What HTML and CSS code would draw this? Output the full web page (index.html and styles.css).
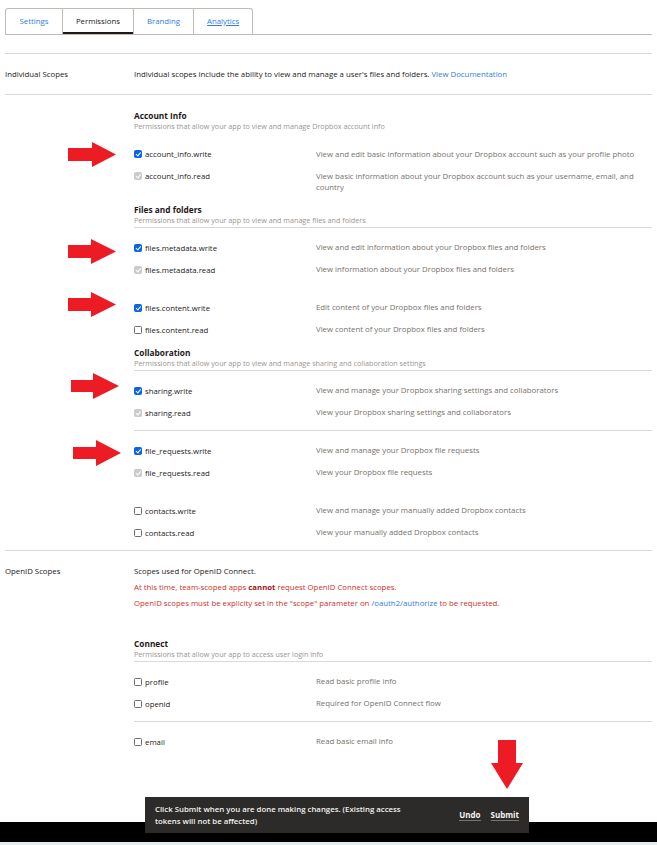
FILE: index.html
```html
<!DOCTYPE html>
<html lang="en">
<head>
    <meta charset="UTF-8">
    <meta name="viewport" content="width=device-width, initial-scale=1.0">
    <title>App Permissions</title>
    <link rel="stylesheet" href="styles.css">
</head>
<body>
    <div class="page">
        <nav class="tabs">
            <a class="tab">Settings</a>
            <a class="tab active">Permissions</a>
            <a class="tab">Branding</a>
            <a class="tab underlined">Analytics</a>
        </nav>

        <div class="section-row">
            <div class="section-label">Individual Scopes</div>
            <div class="section-body">Individual scopes include the ability to view and manage a user's files and folders. <a class="link">View Documentation</a></div>
        </div>

        <div class="section-row scopes">
            <div class="section-label"></div>
            <div class="section-body">
                <div class="group">
                    <h3 class="group-title">Account Info</h3>
                    <p class="group-sub">Permissions that allow your app to view and manage Dropbox account info</p>
                    <div class="block no-rule">
                        <div class="scope"><span class="scope-name"><span class="cb on"></span>account_info.write</span><span class="scope-desc">View and edit basic information about your Dropbox account such as your profile photo</span></div>
                        <div class="scope"><span class="scope-name"><span class="cb locked"></span>account_info.read</span><span class="scope-desc">View basic information about your Dropbox account such as your username, email, and country</span></div>
                    </div>
                </div>

                <div class="group">
                    <h3 class="group-title">Files and folders</h3>
                    <p class="group-sub">Permissions that allow your app to view and manage files and folders</p>
                    <div class="block">
                        <div class="scope"><span class="scope-name"><span class="cb on"></span>files.metadata.write</span><span class="scope-desc">View and edit information about your Dropbox files and folders</span></div>
                        <div class="scope"><span class="scope-name"><span class="cb locked"></span>files.metadata.read</span><span class="scope-desc">View information about your Dropbox files and folders</span></div>
                    </div>
                    <div class="block no-rule">
                        <div class="scope"><span class="scope-name"><span class="cb on"></span>files.content.write</span><span class="scope-desc">Edit content of your Dropbox files and folders</span></div>
                        <div class="scope"><span class="scope-name"><span class="cb"></span>files.content.read</span><span class="scope-desc">View content of your Dropbox files and folders</span></div>
                    </div>
                </div>

                <div class="group">
                    <h3 class="group-title">Collaboration</h3>
                    <p class="group-sub">Permissions that allow your app to view and manage sharing and collaboration settings</p>
                    <div class="block">
                        <div class="scope"><span class="scope-name"><span class="cb on"></span>sharing.write</span><span class="scope-desc">View and manage your Dropbox sharing settings and collaborators</span></div>
                        <div class="scope"><span class="scope-name"><span class="cb locked"></span>sharing.read</span><span class="scope-desc">View your Dropbox sharing settings and collaborators</span></div>
                    </div>
                    <div class="block">
                        <div class="scope"><span class="scope-name"><span class="cb on"></span>file_requests.write</span><span class="scope-desc">View and manage your Dropbox file requests</span></div>
                        <div class="scope"><span class="scope-name"><span class="cb locked"></span>file_requests.read</span><span class="scope-desc">View your Dropbox file requests</span></div>
                    </div>
                    <div class="block no-rule">
                        <div class="scope"><span class="scope-name"><span class="cb"></span>contacts.write</span><span class="scope-desc">View and manage your manually added Dropbox contacts</span></div>
                        <div class="scope"><span class="scope-name"><span class="cb"></span>contacts.read</span><span class="scope-desc">View your manually added Dropbox contacts</span></div>
                    </div>
                </div>
            </div>
        </div>

        <div class="section-row openid">
            <div class="section-label">OpenID Scopes</div>
            <div class="section-body">
                <p class="line">Scopes used for OpenID Connect.</p>
                <p class="line warn">At this time, team-scoped apps <b>cannot</b> request OpenID Connect scopes.</p>
                <p class="line warn">OpenID scopes must be explicity set in the "scope" parameter on <a class="link">/oauth2/authorize</a> to be requested.</p>

                <div class="group connect">
                    <h3 class="group-title">Connect</h3>
                    <p class="group-sub">Permissions that allow your app to access user login info</p>
                    <div class="block">
                        <div class="scope"><span class="scope-name"><span class="cb"></span>profile</span><span class="scope-desc">Read basic profile info</span></div>
                        <div class="scope"><span class="scope-name"><span class="cb"></span>openid</span><span class="scope-desc">Required for OpenID Connect flow</span></div>
                    </div>
                    <div class="block">
                        <div class="scope"><span class="scope-name"><span class="cb"></span>email</span><span class="scope-desc">Read basic email info</span></div>
                    </div>
                </div>
            </div>
        </div>
    </div>

    <footer class="footer"></footer>

    <div class="toast">
        <span class="toast-text">Click Submit when you are done making changes. (Existing access tokens will not be affected)</span>
        <a class="toast-btn">Undo</a>
        <a class="toast-btn">Submit</a>
    </div>

    <!-- red annotation arrows drawn over the screenshot -->
    <svg class="marks" width="657" height="845" viewBox="0 0 657 845">
        <polygon points="68,148 92,148 92,142 116,154.5 92,167 92,161 68,161"/>
        <polygon points="68,245 91,245 91,239 116,251.5 91,264 91,258 68,258"/>
        <polygon points="68,298 91,298 91,292 116,304.5 91,317 91,311 68,311"/>
        <polygon points="71,380 93,380 93,373 119,386 93,399 93,392 71,392"/>
        <polygon points="73,447 96,447 96,440 121,453 96,466 96,459 73,459"/>
        <polygon points="498,740 516,740 516,763 523,763 507,789 491,763 498,763"/>
    </svg>
</body>
</html>
```

FILE: styles.css
```css
body {
    margin: 0;
    min-height: 100vh;
    display: flex;
    flex-direction: column;
    position: relative;
    font-family: "Open Sans", "DejaVu Sans", sans-serif;
    font-size: 7.8px;
    color: #1e1919;
    background: #fff;
}
p {
    margin: 0;
}
.page {
    padding: 8px 5px 0;
}

/* tabs */
.tabs {
    display: flex;
    border-bottom: 1px solid #c2bbb3;
    margin-bottom: 18px;
}
.tab {
    height: 25px;
    line-height: 25px;
    padding: 0 13px;
    border: 1px solid #c2bbb3;
    border-bottom: none;
    border-left: none;
    color: #2f7de1;
}
.tab:first-child {
    border-left: 1px solid #c2bbb3;
    border-top-left-radius: 3px;
    padding: 0 13.5px;
}
.tab:last-child {
    border-top-right-radius: 3px;
}
.tab.active {
    color: #1e1919;
    box-shadow: inset 0 -2px 0 #1e1919;
}
.tab.underlined {
    text-decoration: underline;
}

/* sections */
.section-row {
    display: grid;
    grid-template-columns: 129px 1fr;
    border-top: 1px solid #d9d9d9;
    padding: 12px 0;
    line-height: 16px;
}
.section-row.scopes {
    padding: 15px 0 0;
    line-height: normal;
}
.section-row.openid {
    padding-bottom: 0;
}
.link {
    color: #2f7de1;
}

/* scope groups */
.group {
    padding-top: 1px;
}
.group.connect {
    margin-top: 27px;
}
.group-title {
    margin: 0;
    font-size: 8.3px;
    font-weight: 700;
    line-height: 10px;
}
.group-sub {
    font-size: 7.2px;
    line-height: 10px;
    color: #9b958f;
    margin-bottom: 2px;
}
.block {
    border-top: 1px solid #d9d9d9;
    padding: 9px 0 6px;
}
.block.no-rule {
    border-top-color: transparent;
}
.scope {
    display: flex;
    align-items: flex-start;
    padding: 5px 0;
}
.scope-name {
    width: 182px;
    flex-shrink: 0;
    display: flex;
    align-items: center;
    gap: 3px;
    line-height: 12px;
}
.scope-desc {
    flex: 1;
    padding-right: 8px;
    line-height: 11px;
    padding-top: 0.5px;
    color: #77716b;
}

/* checkboxes */
.cb {
    width: 8px;
    height: 8px;
    box-sizing: border-box;
    border: 1px solid #6f6a66;
    border-radius: 1.5px;
    background: #fff;
    position: relative;
    flex-shrink: 0;
}
.cb.on {
    background: #0d62e8;
    border-color: #0d62e8;
}
.cb.locked {
    background: #cdcbc9;
    border-color: #cdcbc9;
}
.cb.on::after, .cb.locked::after {
    content: "";
    position: absolute;
    left: 1.8px;
    top: 0;
    width: 1.6px;
    height: 3.8px;
    border: solid #fff;
    border-width: 0 1.2px 1.2px 0;
    transform: rotate(40deg);
}

/* openid */
.warn {
    color: #d12f2a;
}
.warn b {
    color: #a3141a;
}

/* footer + toast */
.footer {
    margin-top: auto;
    height: 20px;
    background: #000;
    border-bottom: 3px solid #dfeeef;
}
.toast {
    position: fixed;
    left: 145px;
    bottom: 12px;
    width: 384px;
    height: 36px;
    box-sizing: border-box;
    padding: 0 10px;
    display: flex;
    align-items: center;
    gap: 10px;
    background: #2c2b2a;
    color: #f4f2ef;
    font-weight: 600;
    font-size: 7.8px;
    line-height: 12px;
}
.toast-text {
    width: 266px;
    margin-right: auto;
}
.toast-btn {
    font-weight: 700;
    font-size: 8px;
    border-bottom: 1px solid #77726d;
    line-height: 11px;
}
.marks {
    position: absolute;
    top: 0;
    left: 0;
    pointer-events: none;
}
.marks polygon {
    fill: #ed1c24;
}
```
